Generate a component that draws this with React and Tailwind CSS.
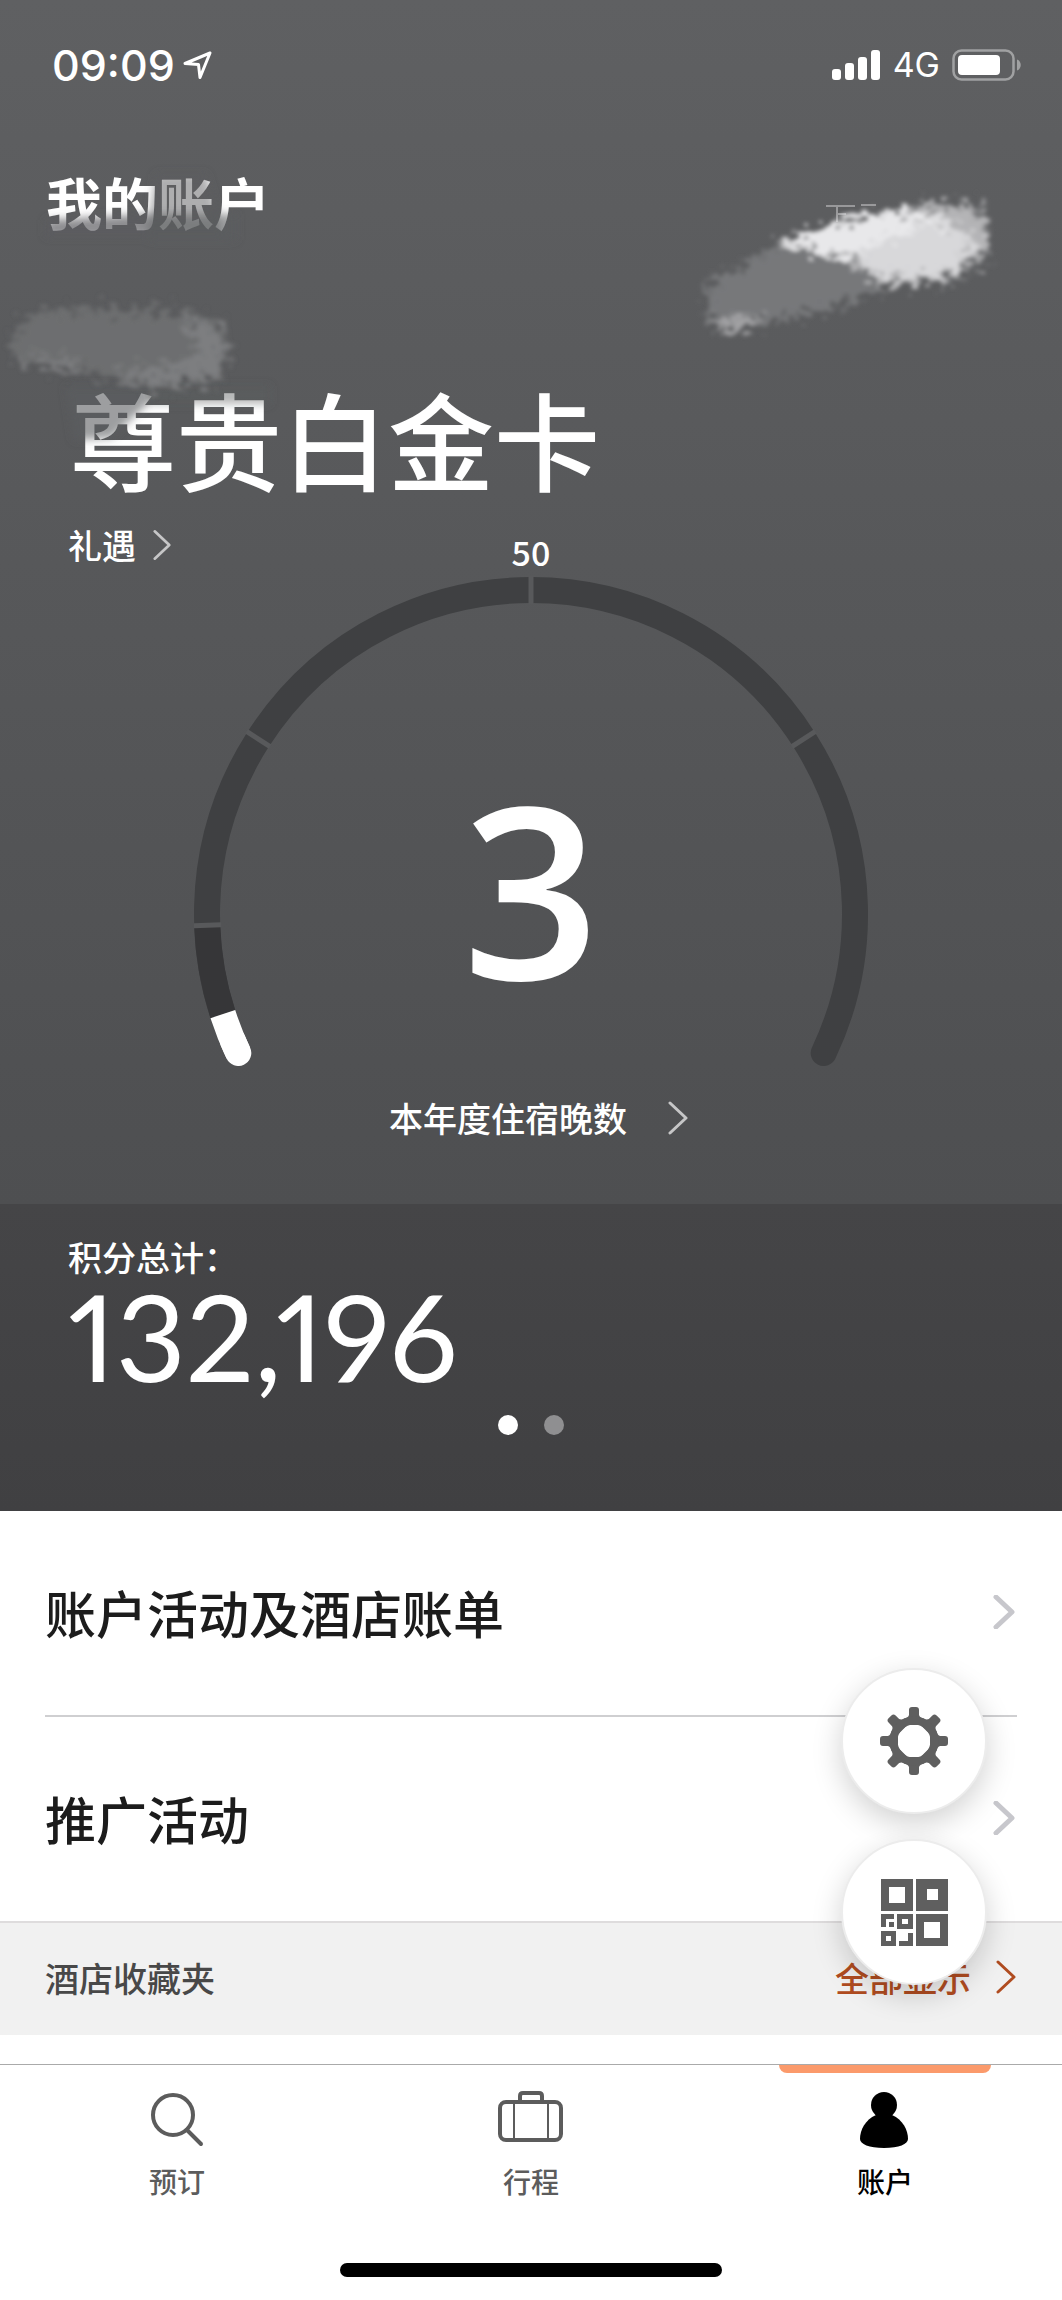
import React, { useState } from 'react';

const NIGHTS = 3;
const POINTS = 132196;

const MENU_ITEMS = ['账户活动及酒店账单', '推广活动'];

const GAUGE = { cx: 337, cy: 340, r: 324 };

// angles are in degrees, measured clockwise from the top of the dial
const polar = (angle, radius = GAUGE.r) => {
  const rad = (angle * Math.PI) / 180;
  return [GAUGE.cx + radius * Math.sin(rad), GAUGE.cy - radius * Math.cos(rad)];
};

const arcPath = (from, to) => {
  const [x1, y1] = polar(from);
  const [x2, y2] = polar(to);
  const large = to - from > 180 ? 1 : 0;
  return `M${x1} ${y1}A${GAUGE.r} ${GAUGE.r} 0 ${large} 1 ${x2} ${y2}`;
};

const Chevron = ({ className, strokeWidth = 3 }) => (
  <svg viewBox="0 0 22 34" className={className} fill="none" stroke="currentColor" strokeWidth={strokeWidth} strokeLinecap="round" strokeLinejoin="round" aria-hidden="true">
    <path d="M3 2L19 17L3 32" />
  </svg>
);

const StatusBar = () => (
  <div className="flex h-[130px] items-center justify-between pl-[52px] pr-10 font-['Inter',sans-serif] text-white">
    <div className="flex items-center gap-2">
      <span className="text-[43px] font-medium leading-none">09:09</span>
      <svg viewBox="0 0 30 30" className="h-[30px] w-[30px]" fill="none" stroke="currentColor" strokeWidth="3" strokeLinejoin="round" aria-hidden="true">
        <path d="M27 3L2 13.500L15.500 14.500L17 27.500Z" />
      </svg>
    </div>
    <div className="flex items-center gap-3">
      <svg viewBox="0 0 49 30" className="h-[30px] w-[49px]" fill="currentColor" aria-hidden="true">
        <rect x="0" y="19" width="9" height="11" rx="3" />
        <rect x="13" y="13" width="9" height="17" rx="3" />
        <rect x="26" y="7" width="9" height="23" rx="3" />
        <rect x="39" y="0" width="9" height="30" rx="3" />
      </svg>
      <span className="text-[34px] leading-none">4G</span>
      <svg viewBox="0 0 70 32" className="h-[32px] w-[70px]" aria-hidden="true">
        <rect x="1.500" y="1.500" width="60" height="29" rx="8" fill="none" stroke="#a0a1a2" strokeWidth="2.500" />
        <rect x="6" y="6" width="42" height="20" rx="4" fill="#fff" />
        <path d="M65 10.500C70 12 70 20 65 21.500Z" fill="#a0a1a2" />
      </svg>
    </div>
  </div>
);

const Smudges = () => (
  <svg viewBox="0 0 1062 500" className="pointer-events-none absolute left-0 top-0 w-full" aria-hidden="true">
    <defs>
      <filter id="chalk" x="-10%" y="-20%" width="120%" height="140%">
        <feTurbulence type="fractalNoise" baseFrequency="0.1 0.16" numOctaves="5" seed="8" result="noise" />
        <feDisplacementMap in="SourceGraphic" in2="noise" scale="44" xChannelSelector="R" yChannelSelector="G" />
        <feGaussianBlur stdDeviation="2" />
      </filter>
      <filter id="soft" x="-20%" y="-50%" width="140%" height="200%">
        <feGaussianBlur stdDeviation="4" />
      </filter>
    </defs>

    {/* fades over the title and the tier name */}
    <g filter="url(#soft)" fill="#5c5d5f">
      <path d="M46 220L150 214V236H46Z" opacity="0.7" />
      <path d="M156 174H206L214 200L222 236H146Z" opacity="0.5" />
      <path d="M150 214H236V240H150Z" opacity="0.6" />
      <path d="M66 386H150V402L130 420L112 438L74 440Z" opacity="0.6" />
      <path d="M150 386H270V404H150Z" opacity="0.45" />
    </g>

    <path d="M826 206H855M861 205H876M837 206V222M837 214H846" stroke="#98989a" strokeWidth="2" fill="none" />

    <g filter="url(#chalk)">
      <path d="M706 316L708 284L780 243L860 216L938 201L978 204L992 236L986 262L950 284L890 284L840 306L722 334Z" fill="#77787a" />
      <path d="M776 244L850 218L934 204L976 208L990 240L980 260L944 280L876 286L858 266L838 256Z" fill="#b4b4b6" />
      <path d="M784 246L838 222L900 210L950 222L930 244L900 258L850 258Z" fill="#e8e8ea" />
      <path d="M860 252L930 222L976 236L960 266L932 276L872 276Z" fill="#d8d8da" />
      <path d="M716 322L756 314L752 326L722 332Z" fill="#a2a2a4" />
    </g>

    <g filter="url(#chalk)">
      <path d="M10 340L34 312L90 307L180 312L222 322L230 352L222 380L150 390L100 376L16 362Z" fill="#6d6e70" />
      <path d="M180 318L214 326L226 354L218 378L152 386L112 372L168 366L204 352Z" fill="#858587" opacity="0.7" />
      <path d="M20 356L80 362L76 370L20 362Z" fill="#858587" opacity="0.7" />
    </g>
  </svg>
);

const NightsGauge = ({ nights }) => (
  <div className="mx-auto grid w-full max-w-[674px] justify-items-center">
    <svg viewBox="0 0 674 492" className="col-start-1 row-start-1 w-full" fill="none" strokeWidth="26" aria-hidden="true">
      <path d={arcPath(-115.4, 115.4)} stroke="#3f4042" strokeLinecap="round" />
      <path d={arcPath(-108, -92)} stroke="#363638" />
      <path d={arcPath(-115.4, -113)} stroke="#fff" strokeLinecap="round" />
      <path d={arcPath(-115.4, -108)} stroke="#fff" />
      {[-92, -57.3, 0, 57.3].map((angle) => {
        const [x1, y1] = polar(angle, 310);
        const [x2, y2] = polar(angle, 338);
        return <path key={angle} d={`M${x1} ${y1}L${x2} ${y2}`} stroke="#58595b" strokeWidth="5" />;
      })}
    </svg>
    <p className="col-start-1 row-start-1 pt-[193px] font-['Open_Sans',sans-serif] text-[240px] font-semibold leading-[240px]">{nights}</p>
  </div>
);

const GearIcon = () => (
  <svg viewBox="0 0 68 68" className="h-[68px] w-[68px]" fill="#5f5f5f" aria-hidden="true">
    {[0, 45, 90, 135, 180, 225, 270, 315].map((angle) => (
      <path key={angle} transform={`rotate(${angle} 34 34)`} d="M29 3Q29 0 32 0H36Q39 0 39 3V8Q40 11 45 12V18H23V12Q28 11 29 8Z" />
    ))}
    <circle cx="34" cy="34" r="20.500" fill="none" stroke="#5f5f5f" strokeWidth="8" />
  </svg>
);

const QrIcon = () => (
  <svg viewBox="0 0 67 67" className="h-[67px] w-[67px]" fill="#5f5f5f" fillRule="evenodd" aria-hidden="true">
    <path d="M0 0H32V32H0ZM8 8V24H24V8Z" />
    <path d="M35 0H67V32H35ZM46 10V21H57V10Z" />
    <path d="M35 35H67V67H35ZM43 43V59H59V43Z" />
    <path d="M0 35H13V40H5V48H0ZM8 43H13V48H8Z" />
    <path d="M16 35H32V50H16ZM21 40V45H27V40Z" />
    <path d="M0 52H15V67H0ZM5 57V62H10V57Z" />
    <path d="M27 54H32V67H18V62H27Z" />
  </svg>
);

const SearchIcon = () => (
  <svg viewBox="0 0 66 60" className="h-[60px] w-[66px]" fill="none" stroke="currentColor" strokeWidth="4" strokeLinecap="round" aria-hidden="true">
    <circle cx="29" cy="26" r="20" />
    <path d="M43 41L57 55" />
  </svg>
);

const SuitcaseIcon = () => (
  <svg viewBox="0 0 66 60" className="h-[60px] w-[66px]" fill="none" stroke="currentColor" strokeWidth="4" aria-hidden="true">
    <rect x="2" y="13" width="61" height="38" rx="6" />
    <path d="M22 13V7Q22 4 25 4H41Q44 4 44 7V13" />
    <path d="M16 14V50M50 14V50" strokeWidth="2" />
  </svg>
);

const PersonIcon = () => (
  <svg viewBox="0 0 66 60" className="h-[60px] w-[66px]" fill="currentColor" aria-hidden="true">
    <circle cx="32" cy="16" r="13" />
    <path d="M24 26Q32 23 40 26C51 31 56 41 56 50C56 55 47 59 32 59S8 55 8 50C8 41 13 31 24 26Z" />
  </svg>
);

const TABS = [
  { id: 'book', label: '预订', icon: SearchIcon },
  { id: 'trips', label: '行程', icon: SuitcaseIcon },
  { id: 'account', label: '账户', icon: PersonIcon },
];

const App = () => {
  const [activeTab, setActiveTab] = useState('account');

  return (
    <div className="flex min-h-screen flex-col bg-white font-['Noto_Sans_CJK_SC',sans-serif]">
      <header className="relative bg-linear-to-b from-[#5f6062] to-[#4e4f51] text-white">
        <StatusBar />
        <div className="px-[46px] pb-16 pt-[39px]">
          <h1 className="text-[56px] font-bold leading-[64px]">我的账户</h1>
          <div className="px-6 pt-36">
            <h2 className="text-[106px] font-medium leading-[120px]">尊贵白金卡</h2>
          </div>
          <div className="mt-[26px] grid h-[51px] grid-cols-3 px-[22px]">
            <button type="button" className="flex items-center gap-4 self-start justify-self-start text-[34px] font-medium leading-[44px]">
              礼遇
              <Chevron className="h-[32px] w-[20px] text-[#c6c6c7]" />
            </button>
            <span className="self-end text-center text-[34px] font-medium leading-[44px]">50</span>
          </div>
          <NightsGauge nights={NIGHTS} />
          <button type="button" className="mx-auto mt-[30px] flex items-center gap-10 pl-4 text-[34px] font-medium leading-[44px]">
            本年度住宿晚数
            <Chevron className="h-[34px] w-[22px] text-[#c6c6c7]" />
          </button>
        </div>
        <Smudges />
      </header>

      <section className="bg-linear-to-b from-[#454547] to-[#404042] px-[68px] pb-[76px] pt-[31px] text-white">
        <p className="text-[34px] font-medium leading-[44px]">积分总计：</p>
        <p className="mt-[7px] font-['Lato',sans-serif] text-[121px] leading-[100px] proportional-nums">
          {POINTS.toLocaleString('en-US')}
        </p>
        <div className="mt-[29px] flex justify-center gap-[26px]">
          <span className="h-5 w-5 rounded-full bg-white" />
          <span className="h-5 w-5 rounded-full bg-[#8f8f91]" />
        </div>
      </section>

      <ul className="divide-y-2 divide-[#cfcfd1] px-[45px]">
        {MENU_ITEMS.map((item) => (
          <li key={item}>
            <button type="button" className="flex h-[204px] w-full items-center justify-between pb-0.5 pr-0.5 text-[51px] font-medium text-[#1c1c1c]">
              {item}
              <Chevron className="h-[34px] w-[22px] text-[#c7c7cc]" strokeWidth={5} />
            </button>
          </li>
        ))}
      </ul>

      <section className="flex h-[114px] items-center justify-between border-t-2 border-[#dedcdd] bg-[#f1f1f1] px-[45px] pb-1 text-[34px] font-medium">
        <h3 className="text-[#484848]">酒店收藏夹</h3>
        <a href="#favorites" className="flex items-center gap-6 text-[#b04c20]">
          全部显示
          <Chevron className="h-[34px] w-[22px]" />
        </a>
      </section>

      <nav className="mt-auto border-t border-[#aaaaaa] bg-white pb-[23px]">
        <div className="grid grid-cols-3">
          {TABS.map(({ id, label, icon: Icon }) => {
            const active = id === activeTab;
            return (
              <button
                key={id}
                type="button"
                onClick={() => setActiveTab(id)}
                className={`flex flex-col items-center ${active ? 'text-black' : 'text-[#5c5c5c]'}`}
              >
                <span className={`h-2 w-3/5 rounded-b-lg ${active ? 'bg-[#fb9a6b]' : 'bg-transparent'}`} />
                <span className="mt-4">
                  <Icon />
                </span>
                <span className="mt-3 text-[28px] font-medium leading-[40px]">{label}</span>
              </button>
            );
          })}
        </div>
        <div className="mx-auto mt-[62px] h-[14px] w-[36%] rounded-full bg-black" />
      </nav>

      {/* floating shortcuts */}
      <div className="fixed bottom-[315px] right-[75px] flex flex-col gap-[25px]">
        <button type="button" aria-label="设置" className="flex h-[146px] w-[146px] items-center justify-center rounded-full border-2 border-[#ececec] bg-white shadow-[0_10px_30px_rgba(0,0,0,0.18)]">
          <GearIcon />
        </button>
        <button type="button" aria-label="二维码" className="flex h-[146px] w-[146px] items-center justify-center rounded-full border-2 border-[#ececec] bg-white shadow-[0_10px_30px_rgba(0,0,0,0.18)]">
          <QrIcon />
        </button>
      </div>
    </div>
  );
};

export default App;
